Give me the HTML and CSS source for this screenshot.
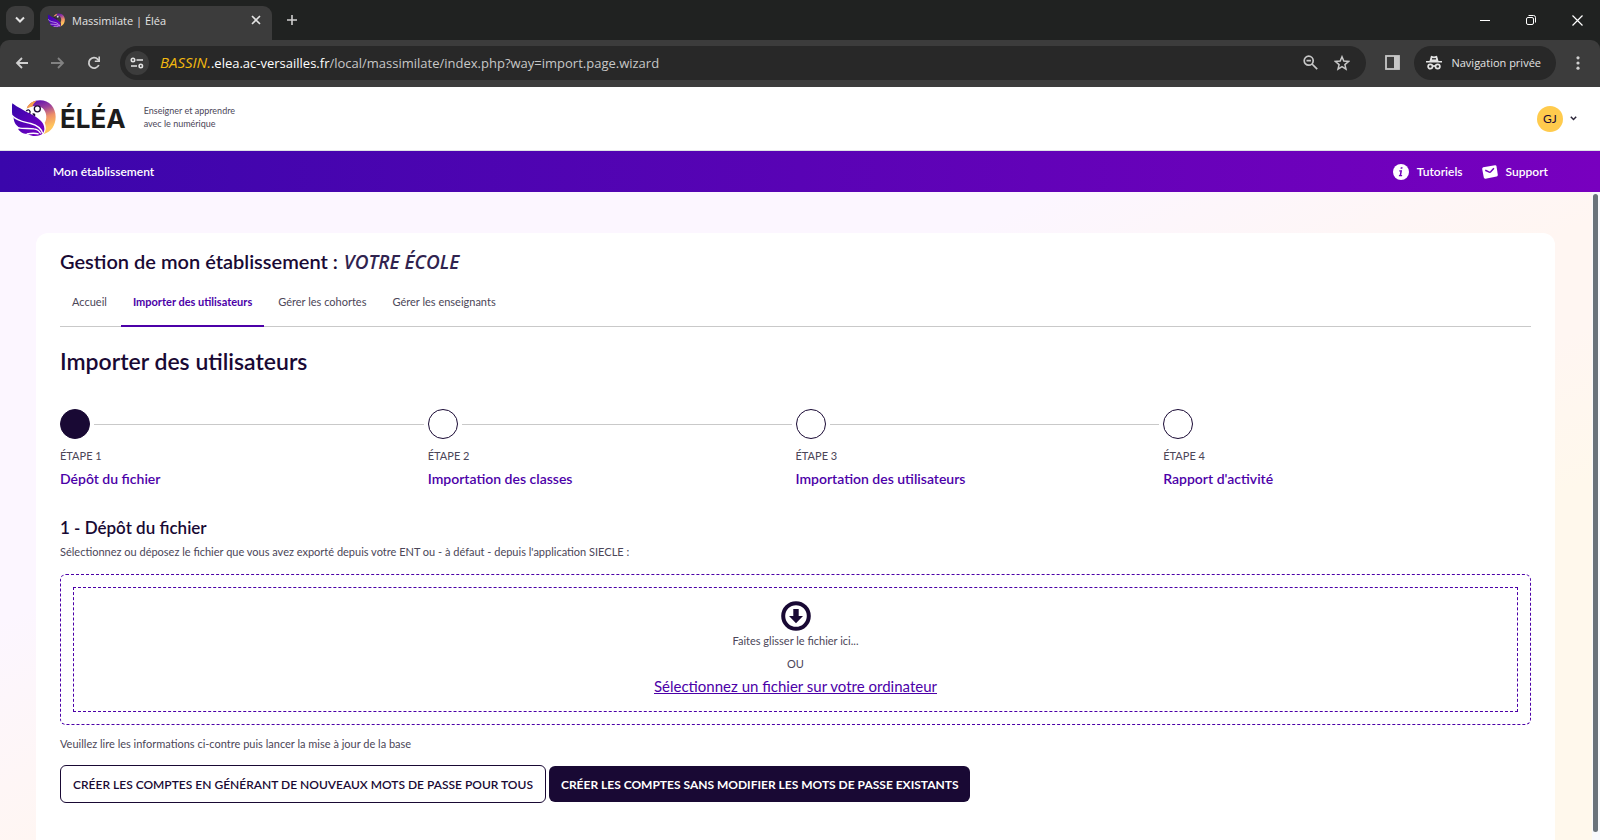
FILE: index.html
```html
<!DOCTYPE html>
<html lang="fr">
<head>
<meta charset="utf-8">
<meta name="viewport" content="width=device-width, initial-scale=1">
<title>Massimilate | Éléa</title>
<link rel="stylesheet" href="styles.css">
</head>
<body>
<svg class="defs" width="0" height="0" aria-hidden="true">
  <defs>
    <linearGradient id="wing" x1="0" y1="0" x2="1" y2="1"><stop offset="0" stop-color="#3406ab"/><stop offset="1" stop-color="#7a00c4"/></linearGradient>
    <linearGradient id="head" x1="0.3" y1="0" x2="0.6" y2="1"><stop offset="0" stop-color="#5a0fb4"/><stop offset="0.28" stop-color="#9a3f9c"/><stop offset="0.55" stop-color="#ee9069"/><stop offset="0.85" stop-color="#ffc45c"/></linearGradient>
    <symbol id="bird" viewBox="0 0 132 110">
      <path fill="url(#head)" d="M44 24C52 8 66 0 84 0c28 0 47 22 47 50 0 26-14 46-36 52 8-10 8-22 3-34 8-12 6-34-6-44-12-9-34-8-48 0z"/>
      <path fill="#f7a04b" d="M44 25C49 12 60 4 74 2c-6 5-10 10-13 17z"/>
      <circle cx="76" cy="26" r="9" fill="#fff" stroke="#1a0933" stroke-width="4"/>
      <path fill="none" stroke="#1a0933" stroke-width="4" d="M43 33c3-6 10-5 11 1 1 4-1 7-3 9"/>
      <path fill="#1a0933" d="M60 41c5-4 11-1 10 5l-4 4c-1-4-4-7-6-9z"/>
      <path fill="url(#wing)" d="M1 9c16 12 36 22 54 32 24 13 44 25 42 48-1 8-5 13-10 15-14 6-30 4-38-2-12 0-24-4-31-16l6-3C14 78 6 68 5 54L1 44C-1 32-1 20 1 9z"/>
      <g fill="none" stroke="#fff" stroke-width="4">
        <path d="M0 46c16 18 36 19 56 24 18 5 32 14 36 30"/>
        <path d="M18 83c18 3 34 1 48 3 9 1 16 6 20 14"/>
        <path d="M44 101c12-2 24-3 36 0"/>
      </g>
    </symbol>
  </defs>
</svg>

<div class="browser">
  <div class="tabstrip">
    <button class="tab-search" aria-label="Rechercher des onglets"><svg width="12" height="8" viewBox="0 0 12 8"><path d="M2 1.500l4 4 4-4" fill="none" stroke="#e3e3e3" stroke-width="2"/></svg></button>
    <div class="tab">
      <svg class="tab-icon" width="17" height="15"><use href="#bird"/></svg>
      <span class="tab-title">Massimilate | Éléa</span>
      <button class="plain" aria-label="Fermer l'onglet"><svg width="10" height="10" viewBox="0 0 10 10"><path d="M1 1l8 8M9 1l-8 8" stroke="#e3e3e3" stroke-width="1.600"/></svg></button>
    </div>
    <button class="plain new-tab" aria-label="Nouvel onglet"><svg width="12" height="12" viewBox="0 0 12 12"><path d="M6 1v10M1 6h10" stroke="#d0d0d0" stroke-width="1.600"/></svg></button>
    <div class="window-controls">
      <button class="plain" aria-label="Réduire"><svg width="10" height="10" viewBox="0 0 10 10"><path d="M0 5.500h10" stroke="#fff"/></svg></button>
      <button class="plain" aria-label="Restaurer"><svg width="10" height="10" viewBox="0 0 10 10"><rect x=".5" y="2.500" width="7" height="7" rx="1.500" fill="none" stroke="#fff"/><path d="M2.500.5h5a2 2 0 0 1 2 2v5" fill="none" stroke="#fff"/></svg></button>
      <button class="plain" aria-label="Fermer"><svg width="11" height="11" viewBox="0 0 11 11"><path d="M.5.5l10 10M10.500.5l-10 10" stroke="#fff" stroke-width="1.200"/></svg></button>
    </div>
  </div>
  <div class="toolbar">
    <div class="history">
      <button class="plain" aria-label="Retour"><svg width="14" height="12" viewBox="0 0 14 12"><path d="M13 6H2M7 1L2 6l5 5" fill="none" stroke="#d0d0d0" stroke-width="1.800"/></svg></button>
      <button class="plain" aria-label="Avancer"><svg width="14" height="12" viewBox="0 0 14 12"><path d="M0 6h12M7 1l5 5-5 5" fill="none" stroke="#828282" stroke-width="1.800"/></svg></button>
      <button class="plain" aria-label="Actualiser"><svg width="14" height="14" viewBox="0 0 14 14"><path d="M11.800 9A5.200 5.200 0 1 1 10.800 3.300L12.500 5" fill="none" stroke="#d0d0d0" stroke-width="1.800"/><path d="M13 .5V6H7.800V4.400h3.600V.5z" fill="#d0d0d0"/></svg></button>
    </div>
    <div class="address">
      <button class="site-info" aria-label="Informations sur le site"><svg width="14" height="12" viewBox="0 0 14 12" fill="none" stroke="#e3e3e3" stroke-width="1.600"><circle cx="3" cy="3" r="1.700"/><path d="M6.500 3H13M1 9h6"/><circle cx="10.800" cy="9" r="1.700"/></svg></button>
      <div class="url" role="textbox" aria-label="Adresse" tabindex="0"><em>BASSIN.</em><b>.elea.ac-versailles.fr</b>/local/massimilate/index.php?way=import.page.wizard</div>
      <button class="plain" aria-label="Zoom"><svg width="15" height="15" viewBox="0 0 15 15" fill="none" stroke="#c7c7c7" stroke-width="1.700"><circle cx="5.700" cy="5.700" r="4.500"/><path d="M9 9l5.200 5.200M3.500 5.700h4.400"/></svg></button>
      <button class="plain" aria-label="Favori"><svg width="16" height="16" viewBox="0 0 16 16"><path d="M8 1.800l1.800 4.300 4.700.4-3.600 3.100 1.100 4.600L8 11.700l-4 2.500 1.100-4.600L1.500 6.500l4.700-.4z" fill="none" stroke="#c7c7c7" stroke-width="1.500"/></svg></button>
    </div>
    <button class="plain side-panel" aria-label="Panneau latéral"><svg width="15" height="15" viewBox="0 0 15 15"><rect x="1" y="1" width="13" height="13" fill="none" stroke="#c7c7c7" stroke-width="1.800"/><path d="M9 1h5v13H9z" fill="#c7c7c7"/></svg></button>
    <button class="private"><svg width="16" height="15" viewBox="0 0 16 15"><path d="M3.500 6L5 .8l3 .8 3-.8L12.500 6H16v1.500H0V6z" fill="#e3e3e3"/><path d="M6 3.800h4" stroke="#282828" stroke-width="1.300"/><g fill="none" stroke="#e3e3e3" stroke-width="1.700"><circle cx="4.300" cy="11.500" r="2.200"/><circle cx="11.700" cy="11.500" r="2.200"/><path d="M6.500 11h3"/></g></svg>Navigation privée</button>
    <button class="plain" aria-label="Menu"><svg width="4" height="14" viewBox="0 0 4 14" fill="#d0d0d0"><circle cx="2" cy="1.800" r="1.600"/><circle cx="2" cy="7" r="1.600"/><circle cx="2" cy="12.200" r="1.600"/></svg></button>
  </div>
</div>

<header class="site-header">
  <a class="brand" href="#"><svg width="44" height="37"><use href="#bird"/></svg>ÉLÉA</a>
  <p class="tagline">Enseigner et apprendre<br>avec le numérique</p>
  <button class="user"><span class="avatar">GJ</span><svg width="7" height="5" viewBox="0 0 7 5"><path d="M.8.8l2.700 2.700L6.200.8" fill="none" stroke="#2a2438" stroke-width="1.500"/></svg></button>
</header>

<nav class="main-nav" aria-label="Navigation principale">
  <a href="#">Mon établissement</a>
  <div class="nav-links">
    <a href="#"><svg width="16" height="16" viewBox="0 0 16 16"><circle cx="8" cy="8" r="8" fill="#fff"/><path d="M7.800 3.200h1.800l-.3 1.600H7.500zM6.300 6.200h2.800l-.9 4.800h1l-.2 1.200H5.800L6 11h.7l.6-3.600H6.200z" fill="#7000bc"/></svg>Tutoriels</a>
    <a href="#"><svg width="16" height="14" viewBox="0 0 16 14"><path d="M1.200 2.200L13 .2q1.200-.2 1.500 1l1.300 8.600q.1 1.400-1.200 1.700L3.500 13.700q-1.400.2-1.700-1.100L.2 4q-.1-1.400 1-1.800z" fill="#fff"/><path d="M3.300 5.300l4 1.800q.8.300 1.400-.3l3.200-3.500" fill="none" stroke="#7000bc" stroke-width="1.500"/></svg>Support</a>
  </div>
</nav>

<div class="viewport">
  <main class="card">
    <h1>Gestion de mon établissement : <em>VOTRE ÉCOLE</em></h1>
    <nav class="tabs" aria-label="Gestion">
      <a href="#">Accueil</a>
      <a href="#" class="active" aria-current="page">Importer des utilisateurs</a>
      <a href="#">Gérer les cohortes</a>
      <a href="#">Gérer les enseignants</a>
    </nav>
    <h2>Importer des utilisateurs</h2>
    <ol class="steps">
      <li class="current"><div class="track"><i></i></div><span>ÉTAPE 1</span><a href="#">Dépôt du fichier</a></li>
      <li><div class="track"><i></i></div><span>ÉTAPE 2</span><a href="#">Importation des classes</a></li>
      <li><div class="track"><i></i></div><span>ÉTAPE 3</span><a href="#">Importation des utilisateurs</a></li>
      <li><div class="track"><i></i></div><span>ÉTAPE 4</span><a href="#">Rapport d'activité</a></li>
    </ol>
    <h3>1 - Dépôt du fichier</h3>
    <p class="hint">Sélectionnez ou déposez le fichier que vous avez exporté depuis votre ENT ou - à défaut - depuis l'application SIECLE :</p>
    <div class="dropzone">
      <div class="drop-inner">
        <svg width="30" height="30" viewBox="0 0 30 30"><circle cx="15" cy="15" r="12.800" fill="none" stroke="#190934" stroke-width="4"/><path d="M12.300 8h5.400v7h4.300l-7 7.200L8 15h4.300z" fill="#190934"/></svg>
        <p>Faites glisser le fichier ici...</p>
        <p>OU</p>
        <a href="#">Sélectionnez un fichier sur votre ordinateur</a>
      </div>
    </div>
    <p class="note">Veuillez lire les informations ci-contre puis lancer la mise à jour de la base</p>
    <div class="actions">
      <button class="btn outline">CRÉER LES COMPTES EN GÉNÉRANT DE NOUVEAUX MOTS DE PASSE POUR TOUS</button>
      <button class="btn solid">CRÉER LES COMPTES SANS MODIFIER LES MOTS DE PASSE EXISTANTS</button>
    </div>
  </main>
  <div class="scroll-rail" aria-hidden="true"><div class="scroll-thumb"></div></div>
</div>
</body>
</html>
```
FILE: styles.css
```css
* { box-sizing: border-box; }

body {
  margin: 0;
  min-height: 100vh;
  display: flex;
  flex-direction: column;
  font-family: Lato, "Liberation Sans", sans-serif;
  font-size: 11px;
  color: #4b4658;
  background: #fff;
}

h1, h2, h3, p, ol { margin: 0; padding: 0; }
a { color: inherit; text-decoration: none; }
svg { display: block; flex: none; }
.defs { position: absolute; }
button { font: inherit; color: inherit; cursor: pointer; }

.plain {
  border: 0;
  padding: 0;
  background: none;
  display: flex;
  align-items: center;
  justify-content: center;
}

/* Browser window */
.browser {
  font-family: "Open Sans", "Noto Sans", sans-serif;
  color: #e3e3e3;
  background: #202221;
}
.tabstrip {
  height: 40px;
  display: flex;
  align-items: center;
  padding: 0 17px 0 6px;
}
.tab-search {
  width: 28px;
  height: 28px;
  padding: 0;
  border: 0;
  border-radius: 9px;
  background: #3c3c3c;
  display: flex;
  align-items: center;
  justify-content: center;
}
.tab {
  align-self: flex-end;
  width: 232px;
  height: 34px;
  margin-left: 6px;
  padding: 0 11px 6px 8px;
  display: flex;
  align-items: center;
  gap: 7px;
  border-radius: 9px 9px 0 0;
  background: #3c3c3c;
}
.tab-title { flex: 1; }
.new-tab { margin-left: 14px; }
.window-controls {
  margin-left: auto;
  display: flex;
  gap: 36px;
}
.toolbar {
  height: 47px;
  display: flex;
  align-items: center;
  padding: 0 20px 2px 15px;
  border-radius: 9px 9px 0 0;
  background: #3c3c3c;
}
.history { display: flex; gap: 22px; }
.address {
  flex: 1;
  height: 34px;
  margin-left: 19px;
  padding: 0 16px 0 5px;
  display: flex;
  align-items: center;
  gap: 16px;
  border-radius: 17px;
  background: #282828;
}
.site-info {
  width: 24px;
  height: 24px;
  padding: 0;
  border: 0;
  border-radius: 50%;
  background: #3c3c3c;
  display: flex;
  align-items: center;
  justify-content: center;
}
.url {
  flex: 1;
  margin-left: -5px;
  font-size: 13px;
  line-height: 20px;
  color: #c7c7c7;
  white-space: nowrap;
}
.url b { font-weight: 400; color: #fff; }
.url em { font-size: 15px; color: #f2b90f; }
.side-panel { margin: 0 14px 0 19px; }
.private {
  height: 34px;
  padding: 0 15px 0 12px;
  margin-right: 20px;
  display: flex;
  align-items: center;
  gap: 9px;
  border: 0;
  border-radius: 17px;
  background: #282828;
}

/* Site header */
.site-header {
  height: 64px;
  padding: 0 23px 0 12px;
  display: flex;
  align-items: center;
  border-bottom: 1px solid #dee2e6;
}
.brand {
  display: flex;
  align-items: center;
  gap: 4px;
  font-family: Inter, sans-serif;
  font-size: 26px;
  font-weight: 700;
  color: #1c1c1c;
}
.tagline {
  margin-left: 18px;
  padding-bottom: 4px;
  font-size: 9px;
  line-height: 13px;
}
.user {
  margin-left: auto;
  padding: 0;
  border: 0;
  background: none;
  display: flex;
  align-items: center;
  gap: 7px;
}
.avatar {
  width: 26px;
  height: 26px;
  border-radius: 50%;
  background: #ffcb4d;
  color: #190934;
  font-size: 12px;
  line-height: 26px;
}

.main-nav {
  height: 41px;
  padding: 0 52px 0 53px;
  display: flex;
  align-items: center;
  justify-content: space-between;
  background: linear-gradient(90deg, #3a06ab, #7800bf);
  color: #fff;
  font-size: 12px;
  font-weight: 600;
}
.nav-links { display: flex; gap: 19px; }
.nav-links a {
  display: flex;
  align-items: center;
  gap: 8px;
}

/* Page area */
.viewport {
  flex: 1;
  display: flex;
  background: linear-gradient(to bottom right, #fcf6ff 33%, #fff6f2 52%, #fff6f2 60%, #fff8ec 72%);
}
.card {
  flex: 1;
  margin: 41px 37px 0 36px;
  padding: 15px 24px 35px;
  border-radius: 12px 12px 0 0;
  background: #fff;
}
h1, h2, h3 { color: #190934; font-weight: 600; }
h1 { font-size: 20px; line-height: 26px; }
h1 em {
  margin-left: 1px;
  font-family: "Open Sans", sans-serif;
  font-size: 19px;
  line-height: 24px;
  color: #30234f;
}
h2 { margin-top: 20px; font-size: 23px; line-height: 28px; }
h3 { margin-top: 27px; font-size: 17px; line-height: 24px; }

.tabs {
  margin-top: 12px;
  display: flex;
  gap: 2px;
  border-bottom: 1px solid #c9c9c9;
}
.tabs a {
  height: 41px;
  padding: 0 12px;
  line-height: 32px;
  margin-bottom: -1px;
}
.tabs .active {
  border-bottom: 2px solid #4c00a8;
  color: #4c00a8;
  font-weight: 700;
}

.steps {
  margin-top: 34px;
  display: grid;
  grid-template-columns: repeat(4, 1fr);
  list-style: none;
}
.steps li { display: flex; flex-direction: column; align-items: flex-start; }
.track {
  width: 100%;
  display: flex;
  align-items: center;
  gap: 4px;
  padding-right: 4px;
}
.track i {
  width: 30px;
  height: 30px;
  border: 1px solid #190934;
  border-radius: 50%;
}
.steps li:not(:last-child) .track::after {
  content: "";
  flex: 1;
  height: 1px;
  background: #c9c9c9;
}
.current .track i { background: #190934; }
.steps span { margin-top: 8px; line-height: 18px; }
.steps a {
  margin-top: 4px;
  font-size: 14px;
  line-height: 20px;
  font-weight: 600;
  color: #4c00a8;
}

.hint { line-height: 24px; }
.dropzone {
  margin-top: 10px;
  padding: 12px;
  border: 1px dashed #4c00a8;
  border-radius: 6px;
}
.drop-inner {
  padding: 13px 12px 15px;
  display: flex;
  flex-direction: column;
  align-items: center;
  border: 1px dashed #4c00a8;
}
.drop-inner p { margin-bottom: 4px; line-height: 19px; }
.drop-inner a {
  font-size: 15px;
  line-height: 19px;
  color: #4c00a8;
  text-decoration: underline;
}
.note { margin-top: 7px; line-height: 24px; }
.actions {
  margin-top: 9px;
  display: flex;
  align-items: center;
  gap: 3px;
}
.btn {
  padding: 0 12px;
  border-radius: 6px;
  font-size: 12px;
  white-space: nowrap;
}
.outline {
  height: 38px;
  border: 1px solid #190934;
  background: #fff;
  color: #190934;
  font-weight: 600;
}
.solid {
  height: 36px;
  border: 0;
  background: #190934;
  color: #fff;
  font-weight: 700;
}

.scroll-rail {
  width: 8px;
  padding: 2px 2px 8px 1px;
  display: flex;
  background: #f8f9fc;
}
.scroll-thumb { flex: 1; border-radius: 3px; background: #6a737b; }
```
